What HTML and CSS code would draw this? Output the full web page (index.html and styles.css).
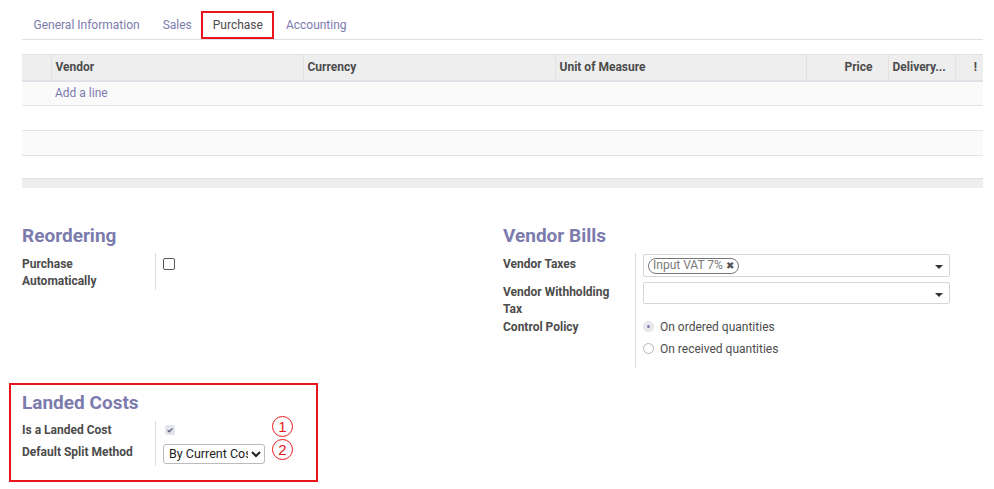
FILE: index.html
```html
<!DOCTYPE html>
<html>
<head>
<meta charset="utf-8">
<link rel="stylesheet" href="styles.css">
</head>
<body>
<div class="page">
  <ul class="tabs">
    <li class="tab">General Information</li>
    <li class="tab">Sales</li>
    <li class="tab active">Purchase</li>
    <li class="tab">Accounting</li>
  </ul>

  <table class="lines">
    <thead>
      <tr>
        <th class="c-handle"></th>
        <th class="c-vendor">Vendor</th>
        <th class="c-currency">Currency</th>
        <th class="c-uom">Unit of Measure</th>
        <th class="c-price">Price</th>
        <th class="c-delivery">Delivery...</th>
        <th class="c-opt">!</th>
      </tr>
    </thead>
    <tbody>
      <tr class="odd"><td></td><td colspan="6" class="add-line">Add a line</td></tr>
      <tr><td colspan="7"></td></tr>
      <tr class="odd"><td colspan="7"></td></tr>
      <tr class="last"><td colspan="7"></td></tr>
    </tbody>
    <tfoot><tr><td colspan="7"></td></tr></tfoot>
  </table>

  <div class="groups">
    <div class="group">
      <h2 class="heading">Reordering</h2>
      <div class="fields">
        <div class="labels">
          <div class="label two">Purchase Automatically</div>
        </div>
        <div class="values">
          <div class="val-row tall"><span class="checkbox"></span></div>
        </div>
      </div>
    </div>
    <div class="group">
      <h2 class="heading">Vendor Bills</h2>
      <div class="fields">
        <div class="labels right">
          <div class="label r1">Vendor Taxes</div>
          <div class="label r2">Vendor Withholding Tax</div>
          <div class="label r3">Control Policy</div>
        </div>
        <div class="values">
          <div class="input many2many">
            <span class="tag">Input VAT 7% <span class="tag-x">&#10006;</span></span>
            <span class="caret"></span>
          </div>
          <div class="input second">
            <span class="caret"></span>
          </div>
          <div class="radios">
            <div class="radio-row"><span class="radio checked"></span>On ordered quantities</div>
            <div class="radio-row"><span class="radio"></span>On received quantities</div>
          </div>
        </div>
      </div>
    </div>
  </div>

  <div class="landed">
    <h2 class="heading">Landed Costs</h2>
    <div class="fields">
      <div class="labels">
        <div class="label lc">Is a Landed Cost</div>
        <div class="label lc">Default Split Method</div>
      </div>
      <div class="values">
        <div class="lc-row">
          <span class="val-cell"><span class="mini-check"><svg viewBox="0 0 10 10" width="10" height="10"><path d="M2.6 5.2 L4.3 6.8 L7.5 3.4" fill="none" stroke="#5b5d80" stroke-width="1.3"/></svg></span></span>
          <span class="num">1</span>
        </div>
        <div class="lc-row">
          <span class="val-cell"><select class="split"><option>By Current Cost</option></select></span>
          <span class="num">2</span>
        </div>
      </div>
    </div>
  </div>
</div>
</body>
</html>
```

FILE: styles.css
```css
* { box-sizing: border-box; }
body {
  margin: 0;
  font-family: Roboto, "Noto Sans", "Liberation Sans", sans-serif;
  font-size: 12px;
  color: #4c4c4c;
  background: #fff;
}
.page { padding: 10px 11px 0 22px; }

.tabs {
  list-style: none;
  margin: 0;
  padding: 0;
  display: flex;
  border-bottom: 1px solid #dee2e6;
  width: 961px;
}
.tab {
  height: 29px;
  line-height: 30px;
  padding: 0 11.5px;
  color: #7c7bad;
}
.tab.active {
  color: #4c4c4c;
  outline: 2px solid #e8161b;
  outline-offset: -2px;
  height: 28px;
  line-height: 28px;
  margin-top: 1px;
  margin-left: -2px;
}

.lines {
  margin-top: 14px;
  width: 961px;
  border-collapse: collapse;
  table-layout: fixed;
}
.lines th {
  background: #eeeeee;
  height: 26px;
  border-top: 1px solid #e2e2e2;
  border-bottom: 2px solid #dee2e6;
  border-left: 1px solid #e2e2e2;
  text-align: left;
  font-weight: bold;
  color: #4c4c4c;
  padding: 0 4px;
  white-space: nowrap;
  overflow: hidden;
}
.lines th:first-child { border-left: none; }
.c-handle { width: 29px; }
.c-vendor { width: 252px; }
.c-currency { width: 252px; }
.c-uom { width: 251px; }
.c-price { width: 82px; text-align: right !important; padding-right: 15px !important; }
.c-delivery { width: 67px; }
.c-opt { width: 28px; text-align: right !important; padding-right: 6px !important; }
.lines td {
  height: 25px;
  border-top: 1px solid #e4e4e4;
  padding: 0 4px;
}
.lines tr.last td { height: 23px; }
.lines tr.odd td { background: #fafafa; }
.add-line { color: #7c7bad; }
.lines tfoot td {
  height: 9px;
  padding: 0;
  background: #eeeeee;
  border-top: 1px solid #e0e0e0;
}

.groups {
  display: grid;
  grid-template-columns: 481px 481px;
  margin-top: 37px;
}
.heading {
  margin: 0;
  font-size: 19px;
  font-weight: bold;
  color: #7c7bad;
  line-height: 22px;
  height: 22px;
}
.fields {
  display: flex;
  margin-top: 6px;
}
.labels {
  width: 134px;
  flex: none;
  border-right: 1px solid #dcdcdc;
  padding-right: 6px;
  padding-top: 3px;
}
.labels.right { width: 133px; }
.label {
  font-weight: bold;
  line-height: 17px;
}
.label.r1 { height: 28px; }
.label.r2 { height: 35px; }
.label.r3 { height: 49px; }
.values { padding-left: 7px; padding-top: 1px; }
.val-row.tall { height: 36px; padding-top: 4px; }
.checkbox {
  display: block;
  width: 12px;
  height: 12px;
  border: 1px solid #555;
  border-radius: 2px;
  background: #fff;
}

.input {
  position: relative;
  width: 307px;
  height: 23px;
  border: 1px solid #d6d6d6;
  border-radius: 2px;
}
.input.second { margin-top: 5px; height: 22px; }
.many2many { padding: 3px 0 0 4px; }
.tag {
  display: inline-block;
  height: 16px;
  line-height: 13px;
  padding: 0 4px;
  border: 1.5px solid #777;
  border-radius: 9px;
  color: #7a7a7a;
  font-size: 12px;
}
.tag-x { font-size: 10px; color: #555; }
.caret {
  position: absolute;
  right: 6px;
  top: 10px;
  width: 0;
  height: 0;
  border-left: 4px solid transparent;
  border-right: 4px solid transparent;
  border-top: 4px solid #333;
}
.radios { margin-top: 12px; padding-bottom: 6px; }
.radio-row {
  display: flex;
  align-items: center;
  height: 22px;
  color: #4c4c4c;
}
.radio {
  display: inline-block;
  width: 11px;
  height: 11px;
  border-radius: 50%;
  border: 1px solid #b5b5b5;
  margin: 0 6px 0 0;
  position: relative;
  background: #fff;
}
.radio.checked { background: #e9e9ee; border-color: #e0e0e6; }
.radio.checked::after {
  content: "";
  position: absolute;
  left: 3px; top: 3px;
  width: 3px; height: 3px;
  border-radius: 50%;
  background: #7c7bad;
}

.landed {
  width: 309px;
  margin-top: 15px;
  margin-left: -13px;
  border: 2px solid #e8161b;
  padding: 7px 0 14px 11px;
}
.landed .fields { margin-top: 7px; }
.landed .labels { height: 45px; padding-top: 0; }
.landed .values { padding-top: 0; }
.label.lc { height: 22px; line-height: 18px; }
.lc-row {
  display: flex;
  align-items: center;
  height: 22px;
}
.lc-row:first-child { align-items: flex-start; padding-top: 4px; }
.lc-row:first-child .num { margin-top: -9px; }
.lc-row:last-child .num { margin-top: -8px; }
.val-cell { width: 109px; flex: none; display: flex; align-items: center; }
.mini-check {
  display: inline-flex;
  align-items: center;
  justify-content: center;
  width: 10px;
  height: 10px;
  margin-left: 2px;
  border-radius: 2px;
  background: #e4e4ee;
}
.split {
  width: 102px;
  height: 20px;
  font-family: Roboto, "Liberation Sans", sans-serif;
  font-size: 12.5px;
  color: #222;
  padding: 0 0 0 1px;
  border: 1px solid #bbb;
  border-radius: 3px;
  background: #fff;
}
.num {
  display: inline-flex;
  align-items: center;
  justify-content: center;
  width: 21px;
  height: 21px;
  border: 1.5px solid #e8161b;
  border-radius: 50%;
  color: #e8161b;
  font-family: "Liberation Sans", sans-serif;
  font-size: 15px;
  line-height: 1;
}
```
